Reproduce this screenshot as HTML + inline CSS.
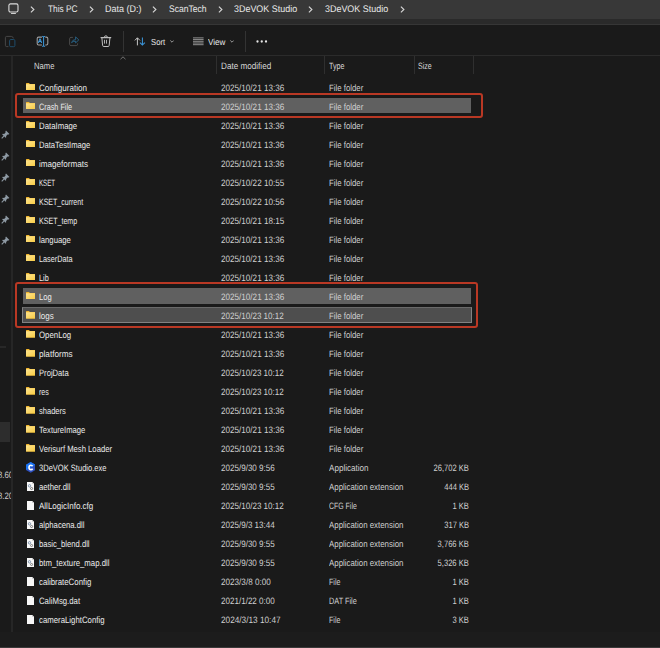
<!DOCTYPE html>
<html><head><meta charset="utf-8">
<style>
html,body{margin:0;padding:0;}
body{width:660px;height:648px;overflow:hidden;background:#1a1a1a;position:relative;font-family:"Liberation Sans",sans-serif;text-rendering:geometricPrecision;}
.abs{position:absolute;}
#addr{position:absolute;left:0;top:0;width:660px;height:19.1px;background:#383838;}
#band{position:absolute;left:0;top:19.1px;width:660px;height:4.899999999999999px;background:#2a2a2a;}
#bandline{position:absolute;left:0;top:23.7px;width:660px;height:1.1px;background:#363636;}
#tb{position:absolute;left:0;top:24.8px;width:660px;height:30.2px;background:#1a1a1a;}
#tbline{position:absolute;left:0;top:55px;width:660px;height:1px;background:#2b2b2b;}
#nav{position:absolute;left:0;top:56px;width:12px;height:592px;background:#1a1a1a;}
#navline{position:absolute;left:11px;top:56px;width:2px;height:575.6px;background:#262626;}
#status{position:absolute;left:0;top:631.6px;width:660px;height:15.2px;background:#1c1c1c;}
#bottom{position:absolute;left:0;top:646.8px;width:660px;height:1.2px;background:#3a3a3a;}
.bc{position:absolute;top:3.3px;height:14px;line-height:14px;font-size:9.6px;color:#e8e8e8;white-space:nowrap;transform-origin:0 50%;}
.chev{position:absolute;top:6px;}
.tbt{position:absolute;top:34.6px;height:14px;line-height:14px;font-size:8.7px;color:#e8e8e8;white-space:nowrap;transform-origin:0 50%;}
.sep{position:absolute;top:31px;width:1px;height:21px;background:#333333;}
.hd{position:absolute;top:58.85px;height:14px;line-height:14px;font-size:9.2px;color:#d8d8d8;white-space:nowrap;transform-origin:0 50%;}
.vd{position:absolute;top:56px;width:1px;height:18px;background:#2f2f2f;}
.row{position:absolute;left:22.9px;width:448.1px;height:15.8px;}
.sel{background:#606060;}
.focus{left:22px;width:449.7px;height:16.5px;margin-top:-0.2px;box-sizing:border-box;border:1px solid #828282;border-top-color:#6a6a6a;background:#4e4e4e;}
.t{position:absolute;height:16px;line-height:16px;font-size:9.2px;white-space:nowrap;transform-origin:0 50%;}
.nm{left:38.7px;color:#ececec;}
.dt{left:220.8px;color:#d0d0d0;}
.ty{left:328.7px;color:#d0d0d0;}
.sz{right:191px;color:#d0d0d0;transform-origin:100% 50%;}
.ic{position:absolute;line-height:0;}
.ic svg{display:block;}
.redbox{position:absolute;border:2.1px solid #b93824;border-radius:3px;box-sizing:border-box;}
.pin{position:absolute;left:0.8px;}
</style></head><body>
<svg width="0" height="0" style="position:absolute"><defs><linearGradient id="fg" x1="0" y1="0" x2="1" y2="1"><stop offset="0" stop-color="#fde592"/><stop offset="1" stop-color="#f8ca40"/></linearGradient></defs></svg>
<div id="addr"></div><div id="band"></div><div id="bandline"></div>
<div id="tb"></div><div id="tbline"></div>
<div id="nav"></div><div id="navline"></div>
<div id="status"></div><div id="bottom"></div>

<svg class="abs" style="left:7.6px;top:2.6px" width="11.5" height="12" viewBox="0 0 11.5 12"><rect x="0.9" y="0.9" width="9.1" height="8.1" rx="1.6" fill="none" stroke="#dcdcdc" stroke-width="1.1"/><path d="M3.2 9.9 L2.8 10.9 H8.1 L7.7 9.9 Z" fill="#cfcfcf"/></svg>
<svg class="chev" style="left:30.2px" width="5" height="7" viewBox="0 0 5 7"><path d="M0.9 0.7 L3.9 3.5 L0.9 6.3" fill="none" stroke="#d8d8d8" stroke-width="1.1"/></svg>
<div class="bc" style="left:48.2px;transform:scaleX(0.867)">This PC</div>
<svg class="chev" style="left:89.2px" width="5" height="7" viewBox="0 0 5 7"><path d="M0.9 0.7 L3.9 3.5 L0.9 6.3" fill="none" stroke="#d8d8d8" stroke-width="1.1"/></svg>
<div class="bc" style="left:105.3px;transform:scaleX(0.935)">Data (D:)</div>
<svg class="chev" style="left:152.3px" width="5" height="7" viewBox="0 0 5 7"><path d="M0.9 0.7 L3.9 3.5 L0.9 6.3" fill="none" stroke="#d8d8d8" stroke-width="1.1"/></svg>
<div class="bc" style="left:168.6px;transform:scaleX(0.892)">ScanTech</div>
<svg class="chev" style="left:217.5px" width="5" height="7" viewBox="0 0 5 7"><path d="M0.9 0.7 L3.9 3.5 L0.9 6.3" fill="none" stroke="#d8d8d8" stroke-width="1.1"/></svg>
<div class="bc" style="left:233.6px;transform:scaleX(0.932)">3DeVOK Studio</div>
<svg class="chev" style="left:308px" width="5" height="7" viewBox="0 0 5 7"><path d="M0.9 0.7 L3.9 3.5 L0.9 6.3" fill="none" stroke="#d8d8d8" stroke-width="1.1"/></svg>
<div class="bc" style="left:324.5px;transform:scaleX(0.932)">3DeVOK Studio</div>
<svg class="chev" style="left:399.8px" width="5" height="7" viewBox="0 0 5 7"><path d="M0.9 0.7 L3.9 3.5 L0.9 6.3" fill="none" stroke="#d8d8d8" stroke-width="1.1"/></svg>

<svg class="abs" style="left:4px;top:35px" width="13" height="13" viewBox="0 0 13 13"><path d="M4.4 11.6 H2.7 Q1.4 11.6 1.4 10.3 V2.7 Q1.4 1.4 2.7 1.4 H7.3 Q9 1.4 9.4 3.4" fill="none" stroke="#474747" stroke-width="1"/><rect x="5.6" y="4.5" width="5.3" height="7.2" rx="1.2" fill="none" stroke="#1f4d6b" stroke-width="1"/></svg>
<svg class="abs" style="left:34px;top:33px" width="16" height="16" viewBox="0 0 16 16"><path d="M7.9 4.1 H4.6 Q3.2 4.1 3.2 5.5 V10.4 Q3.2 11.9 4.6 11.9 H7.9 M11.3 4.1 H12.3 Q13.8 4.1 13.8 5.5 V10.4 Q13.8 11.9 12.3 11.9 H11.3" fill="none" stroke="#a0a0a0" stroke-width="1.05"/><path d="M9.6 3.6 V13.2" stroke="#3fa0e6" stroke-width="0.95"/><path d="M8.1 3.4 Q9.6 3.9 11.1 3.4 M8.1 13.4 Q9.6 12.9 11.1 13.4" fill="none" stroke="#3fa0e6" stroke-width="0.9"/><path d="M4.3 9.9 L6 5.7 L7.7 9.9 M4.9 8.6 H7.1" fill="none" stroke="#3fa0e6" stroke-width="1"/></svg>
<svg class="abs" style="left:66px;top:33px" width="16" height="16" viewBox="0 0 16 16"><path d="M6.9 4.4 H5 Q3.6 4.4 3.6 5.8 V11.2 Q3.6 12.6 5 12.6 H10.2 Q11.6 12.6 11.6 11.2 V10.4" fill="none" stroke="#4a4a4a" stroke-width="1"/><path d="M5.5 9.6 Q6.4 6.6 9.6 6.6 V3.9 L12.8 6.9 L9.6 9.9 V8.2 Q7 8.2 5.5 9.6 Z" fill="none" stroke="#275e80" stroke-width="1" stroke-linejoin="round"/></svg>
<svg class="abs" style="left:98px;top:33px" width="16" height="16" viewBox="0 0 16 16"><path d="M3 4.6 H12.8" stroke="#bdbdbd" stroke-width="1.1" stroke-linecap="round"/><path d="M6.2 4.3 Q6.6 2.8 7.9 2.8 Q9.2 2.8 9.6 4.3" fill="none" stroke="#bdbdbd" stroke-width="1"/><path d="M3.9 5 L4.6 12.4 Q4.7 13.5 5.8 13.5 H10 Q11.1 13.5 11.2 12.4 L11.9 5" fill="none" stroke="#bdbdbd" stroke-width="1"/><path d="M6.5 6.8 V10.6 M8.5 6.8 V10.6" stroke="#b5b5b5" stroke-width="0.95"/></svg>
<div class="sep" style="left:123.3px"></div>
<svg class="abs" style="left:134px;top:36.9px" width="12" height="9.5" viewBox="0 0 12 9.5"><path d="M3.4 8.4 V0.9 M0.9 3.4 L3.4 0.8 L5.9 3.4" fill="none" stroke="#c8c8c8" stroke-width="1"/><path d="M8.4 0.6 V8 M5.9 5.6 L8.4 8.1 L10.9 5.6" fill="none" stroke="#3b94d8" stroke-width="1.05"/></svg>
<div class="tbt" style="left:150.7px;transform:scaleX(0.885)">Sort</div>
<svg class="abs" style="left:169.6px;top:40px" width="4" height="3" viewBox="0 0 4 3"><path d="M0.3 0.5 L2 2.2 L3.7 0.5" fill="none" stroke="#bbb" stroke-width="0.8"/></svg>
<svg class="abs" style="left:192.6px;top:37px" width="11" height="9" viewBox="0 0 11 9"><path d="M0 0.9 H10.6 M0 2.6 H10.6 M0 4.3 H10.6 M0 6.0 H10.6 M0 7.7 H10.6" stroke="#c4c4c4" stroke-width="0.7"/></svg>
<div class="tbt" style="left:208.3px;transform:scaleX(0.931)">View</div>
<svg class="abs" style="left:230.1px;top:40px" width="4" height="3" viewBox="0 0 4 3"><path d="M0.3 0.5 L2 2.2 L3.7 0.5" fill="none" stroke="#bbb" stroke-width="0.8"/></svg>
<div class="sep" style="left:245.2px"></div>
<svg class="abs" style="left:256px;top:40px" width="12" height="3" viewBox="0 0 12 3"><circle cx="1.5" cy="1.5" r="1.15" fill="#e6e6e6"/><circle cx="5.75" cy="1.5" r="1.15" fill="#e6e6e6"/><circle cx="10" cy="1.5" r="1.15" fill="#e6e6e6"/></svg>

<svg class="abs" style="left:119.5px;top:55.5px" width="6" height="4" viewBox="0 0 6 4"><path d="M0.5 3.2 L3 0.8 L5.5 3.2" fill="none" stroke="#8a8a8a" stroke-width="0.8"/></svg>
<div class="hd" style="left:33.6px;transform:scaleX(0.832)">Name</div>
<div class="vd" style="left:216px"></div>
<div class="hd" style="left:220.8px;transform:scaleX(0.886)">Date modified</div>
<div class="vd" style="left:324px"></div>
<div class="hd" style="left:328.7px;transform:scaleX(0.778)">Type</div>
<div class="vd" style="left:413.5px"></div>
<div class="hd" style="left:418px;transform:scaleX(0.769)">Size</div>
<div class="vd" style="left:472.8px"></div>

<svg class="pin" style="top:129.9px" width="9" height="9" viewBox="0 0 9 9"><path d="M5 0.6 L8.4 4 L7.6 4.6 L6.6 4.4 L5.1 5.9 L5.2 7.2 L4.6 7.8 L1.2 4.4 L1.8 3.8 L3.1 3.9 L4.6 2.4 L4.4 1.4 Z" fill="#8d99a3"/><path d="M2.9 6.1 L0.7 8.3" stroke="#8d99a3" stroke-width="1.1"/></svg>
<svg class="pin" style="top:151.5px" width="9" height="9" viewBox="0 0 9 9"><path d="M5 0.6 L8.4 4 L7.6 4.6 L6.6 4.4 L5.1 5.9 L5.2 7.2 L4.6 7.8 L1.2 4.4 L1.8 3.8 L3.1 3.9 L4.6 2.4 L4.4 1.4 Z" fill="#8d99a3"/><path d="M2.9 6.1 L0.7 8.3" stroke="#8d99a3" stroke-width="1.1"/></svg>
<svg class="pin" style="top:172.5px" width="9" height="9" viewBox="0 0 9 9"><path d="M5 0.6 L8.4 4 L7.6 4.6 L6.6 4.4 L5.1 5.9 L5.2 7.2 L4.6 7.8 L1.2 4.4 L1.8 3.8 L3.1 3.9 L4.6 2.4 L4.4 1.4 Z" fill="#8d99a3"/><path d="M2.9 6.1 L0.7 8.3" stroke="#8d99a3" stroke-width="1.1"/></svg>
<svg class="pin" style="top:193.5px" width="9" height="9" viewBox="0 0 9 9"><path d="M5 0.6 L8.4 4 L7.6 4.6 L6.6 4.4 L5.1 5.9 L5.2 7.2 L4.6 7.8 L1.2 4.4 L1.8 3.8 L3.1 3.9 L4.6 2.4 L4.4 1.4 Z" fill="#8d99a3"/><path d="M2.9 6.1 L0.7 8.3" stroke="#8d99a3" stroke-width="1.1"/></svg>
<svg class="pin" style="top:214.5px" width="9" height="9" viewBox="0 0 9 9"><path d="M5 0.6 L8.4 4 L7.6 4.6 L6.6 4.4 L5.1 5.9 L5.2 7.2 L4.6 7.8 L1.2 4.4 L1.8 3.8 L3.1 3.9 L4.6 2.4 L4.4 1.4 Z" fill="#8d99a3"/><path d="M2.9 6.1 L0.7 8.3" stroke="#8d99a3" stroke-width="1.1"/></svg>
<svg class="pin" style="top:235.5px" width="9" height="9" viewBox="0 0 9 9"><path d="M5 0.6 L8.4 4 L7.6 4.6 L6.6 4.4 L5.1 5.9 L5.2 7.2 L4.6 7.8 L1.2 4.4 L1.8 3.8 L3.1 3.9 L4.6 2.4 L4.4 1.4 Z" fill="#8d99a3"/><path d="M2.9 6.1 L0.7 8.3" stroke="#8d99a3" stroke-width="1.1"/></svg>
<div class="abs" style="left:0;top:346.4px;width:6.2px;height:1.3px;background:#282828"></div>
<div class="abs" style="left:0;top:421.6px;width:10px;height:20.4px;background:#2d2d2d"></div>
<div class="abs" style="left:0;top:467.7px;width:11px;height:14px;overflow:hidden"><div style="position:absolute;right:-2.2px;top:0;line-height:14px;font-size:9.2px;color:#d0d0d0;white-space:nowrap;transform:scaleX(0.84);transform-origin:100% 50%">18.60</div></div>
<div class="abs" style="left:0;top:489.1px;width:11px;height:14px;overflow:hidden"><div style="position:absolute;right:-2.2px;top:0;line-height:14px;font-size:9.2px;color:#d0d0d0;white-space:nowrap;transform:scaleX(0.84);transform-origin:100% 50%">18.20</div></div>

<span class="ic" style="left:25.6px;top:82.77px"><svg width="9.6" height="7.4" viewBox="0 0 10 7.4" preserveAspectRatio="none"><path d="M0 0.5 Q0 0 0.5 0 H3.2 L3.9 0.9 H9.5 Q10 0.9 10 1.4 V6.9 Q10 7.4 9.5 7.4 H0.5 Q0 7.4 0 6.9 Z" fill="#f2b52a"/><path d="M0 1.3 H10 V6.9 Q10 7.4 9.5 7.4 H0.5 Q0 7.4 0 6.9 Z" fill="url(#fg)"/></svg></span>
<div class="t nm" style="top:79.50px;transform:scaleX(0.876)">Configuration</div>
<div class="t dt" style="top:79.50px;transform:scaleX(0.884)">2025/10/21 13:36</div>
<div class="t ty" style="top:79.50px;transform:scaleX(0.850)">File folder</div>
<div class="row sel" style="top:97.53px"></div>
<span class="ic" style="left:25.6px;top:101.80px"><svg width="9.6" height="7.4" viewBox="0 0 10 7.4" preserveAspectRatio="none"><path d="M0 0.5 Q0 0 0.5 0 H3.2 L3.9 0.9 H9.5 Q10 0.9 10 1.4 V6.9 Q10 7.4 9.5 7.4 H0.5 Q0 7.4 0 6.9 Z" fill="#f2b52a"/><path d="M0 1.3 H10 V6.9 Q10 7.4 9.5 7.4 H0.5 Q0 7.4 0 6.9 Z" fill="url(#fg)"/></svg></span>
<div class="t nm" style="top:98.53px;transform:scaleX(0.790)">Crash File</div>
<div class="t dt" style="top:98.53px;transform:scaleX(0.884)">2025/10/21 13:36</div>
<div class="t ty" style="top:98.53px;transform:scaleX(0.850)">File folder</div>
<span class="ic" style="left:25.6px;top:120.83px"><svg width="9.6" height="7.4" viewBox="0 0 10 7.4" preserveAspectRatio="none"><path d="M0 0.5 Q0 0 0.5 0 H3.2 L3.9 0.9 H9.5 Q10 0.9 10 1.4 V6.9 Q10 7.4 9.5 7.4 H0.5 Q0 7.4 0 6.9 Z" fill="#f2b52a"/><path d="M0 1.3 H10 V6.9 Q10 7.4 9.5 7.4 H0.5 Q0 7.4 0 6.9 Z" fill="url(#fg)"/></svg></span>
<div class="t nm" style="top:117.56px;transform:scaleX(0.850)">DataImage</div>
<div class="t dt" style="top:117.56px;transform:scaleX(0.884)">2025/10/21 13:36</div>
<div class="t ty" style="top:117.56px;transform:scaleX(0.850)">File folder</div>
<span class="ic" style="left:25.6px;top:139.86px"><svg width="9.6" height="7.4" viewBox="0 0 10 7.4" preserveAspectRatio="none"><path d="M0 0.5 Q0 0 0.5 0 H3.2 L3.9 0.9 H9.5 Q10 0.9 10 1.4 V6.9 Q10 7.4 9.5 7.4 H0.5 Q0 7.4 0 6.9 Z" fill="#f2b52a"/><path d="M0 1.3 H10 V6.9 Q10 7.4 9.5 7.4 H0.5 Q0 7.4 0 6.9 Z" fill="url(#fg)"/></svg></span>
<div class="t nm" style="top:136.59px;transform:scaleX(0.830)">DataTestImage</div>
<div class="t dt" style="top:136.59px;transform:scaleX(0.884)">2025/10/21 13:36</div>
<div class="t ty" style="top:136.59px;transform:scaleX(0.850)">File folder</div>
<span class="ic" style="left:25.6px;top:158.89px"><svg width="9.6" height="7.4" viewBox="0 0 10 7.4" preserveAspectRatio="none"><path d="M0 0.5 Q0 0 0.5 0 H3.2 L3.9 0.9 H9.5 Q10 0.9 10 1.4 V6.9 Q10 7.4 9.5 7.4 H0.5 Q0 7.4 0 6.9 Z" fill="#f2b52a"/><path d="M0 1.3 H10 V6.9 Q10 7.4 9.5 7.4 H0.5 Q0 7.4 0 6.9 Z" fill="url(#fg)"/></svg></span>
<div class="t nm" style="top:155.62px;transform:scaleX(0.879)">imageformats</div>
<div class="t dt" style="top:155.62px;transform:scaleX(0.884)">2025/10/21 13:36</div>
<div class="t ty" style="top:155.62px;transform:scaleX(0.850)">File folder</div>
<span class="ic" style="left:25.6px;top:177.92px"><svg width="9.6" height="7.4" viewBox="0 0 10 7.4" preserveAspectRatio="none"><path d="M0 0.5 Q0 0 0.5 0 H3.2 L3.9 0.9 H9.5 Q10 0.9 10 1.4 V6.9 Q10 7.4 9.5 7.4 H0.5 Q0 7.4 0 6.9 Z" fill="#f2b52a"/><path d="M0 1.3 H10 V6.9 Q10 7.4 9.5 7.4 H0.5 Q0 7.4 0 6.9 Z" fill="url(#fg)"/></svg></span>
<div class="t nm" style="top:174.65px;transform:scaleX(0.671)">KSET</div>
<div class="t dt" style="top:174.65px;transform:scaleX(0.884)">2025/10/22 10:55</div>
<div class="t ty" style="top:174.65px;transform:scaleX(0.850)">File folder</div>
<span class="ic" style="left:25.6px;top:196.95px"><svg width="9.6" height="7.4" viewBox="0 0 10 7.4" preserveAspectRatio="none"><path d="M0 0.5 Q0 0 0.5 0 H3.2 L3.9 0.9 H9.5 Q10 0.9 10 1.4 V6.9 Q10 7.4 9.5 7.4 H0.5 Q0 7.4 0 6.9 Z" fill="#f2b52a"/><path d="M0 1.3 H10 V6.9 Q10 7.4 9.5 7.4 H0.5 Q0 7.4 0 6.9 Z" fill="url(#fg)"/></svg></span>
<div class="t nm" style="top:193.68px;transform:scaleX(0.764)">KSET_current</div>
<div class="t dt" style="top:193.68px;transform:scaleX(0.884)">2025/10/22 10:56</div>
<div class="t ty" style="top:193.68px;transform:scaleX(0.850)">File folder</div>
<span class="ic" style="left:25.6px;top:215.98px"><svg width="9.6" height="7.4" viewBox="0 0 10 7.4" preserveAspectRatio="none"><path d="M0 0.5 Q0 0 0.5 0 H3.2 L3.9 0.9 H9.5 Q10 0.9 10 1.4 V6.9 Q10 7.4 9.5 7.4 H0.5 Q0 7.4 0 6.9 Z" fill="#f2b52a"/><path d="M0 1.3 H10 V6.9 Q10 7.4 9.5 7.4 H0.5 Q0 7.4 0 6.9 Z" fill="url(#fg)"/></svg></span>
<div class="t nm" style="top:212.71px;transform:scaleX(0.771)">KSET_temp</div>
<div class="t dt" style="top:212.71px;transform:scaleX(0.884)">2025/10/21 18:15</div>
<div class="t ty" style="top:212.71px;transform:scaleX(0.850)">File folder</div>
<span class="ic" style="left:25.6px;top:235.01px"><svg width="9.6" height="7.4" viewBox="0 0 10 7.4" preserveAspectRatio="none"><path d="M0 0.5 Q0 0 0.5 0 H3.2 L3.9 0.9 H9.5 Q10 0.9 10 1.4 V6.9 Q10 7.4 9.5 7.4 H0.5 Q0 7.4 0 6.9 Z" fill="#f2b52a"/><path d="M0 1.3 H10 V6.9 Q10 7.4 9.5 7.4 H0.5 Q0 7.4 0 6.9 Z" fill="url(#fg)"/></svg></span>
<div class="t nm" style="top:231.74px;transform:scaleX(0.844)">language</div>
<div class="t dt" style="top:231.74px;transform:scaleX(0.884)">2025/10/21 13:36</div>
<div class="t ty" style="top:231.74px;transform:scaleX(0.850)">File folder</div>
<span class="ic" style="left:25.6px;top:254.04px"><svg width="9.6" height="7.4" viewBox="0 0 10 7.4" preserveAspectRatio="none"><path d="M0 0.5 Q0 0 0.5 0 H3.2 L3.9 0.9 H9.5 Q10 0.9 10 1.4 V6.9 Q10 7.4 9.5 7.4 H0.5 Q0 7.4 0 6.9 Z" fill="#f2b52a"/><path d="M0 1.3 H10 V6.9 Q10 7.4 9.5 7.4 H0.5 Q0 7.4 0 6.9 Z" fill="url(#fg)"/></svg></span>
<div class="t nm" style="top:250.77px;transform:scaleX(0.793)">LaserData</div>
<div class="t dt" style="top:250.77px;transform:scaleX(0.884)">2025/10/21 13:36</div>
<div class="t ty" style="top:250.77px;transform:scaleX(0.850)">File folder</div>
<span class="ic" style="left:25.6px;top:273.07px"><svg width="9.6" height="7.4" viewBox="0 0 10 7.4" preserveAspectRatio="none"><path d="M0 0.5 Q0 0 0.5 0 H3.2 L3.9 0.9 H9.5 Q10 0.9 10 1.4 V6.9 Q10 7.4 9.5 7.4 H0.5 Q0 7.4 0 6.9 Z" fill="#f2b52a"/><path d="M0 1.3 H10 V6.9 Q10 7.4 9.5 7.4 H0.5 Q0 7.4 0 6.9 Z" fill="url(#fg)"/></svg></span>
<div class="t nm" style="top:269.80px;transform:scaleX(0.799)">Lib</div>
<div class="t dt" style="top:269.80px;transform:scaleX(0.884)">2025/10/21 13:36</div>
<div class="t ty" style="top:269.80px;transform:scaleX(0.850)">File folder</div>
<div class="row sel" style="top:287.83px"></div>
<span class="ic" style="left:25.6px;top:292.10px"><svg width="9.6" height="7.4" viewBox="0 0 10 7.4" preserveAspectRatio="none"><path d="M0 0.5 Q0 0 0.5 0 H3.2 L3.9 0.9 H9.5 Q10 0.9 10 1.4 V6.9 Q10 7.4 9.5 7.4 H0.5 Q0 7.4 0 6.9 Z" fill="#f2b52a"/><path d="M0 1.3 H10 V6.9 Q10 7.4 9.5 7.4 H0.5 Q0 7.4 0 6.9 Z" fill="url(#fg)"/></svg></span>
<div class="t nm" style="top:288.83px;transform:scaleX(0.828)">Log</div>
<div class="t dt" style="top:288.83px;transform:scaleX(0.884)">2025/10/21 13:36</div>
<div class="t ty" style="top:288.83px;transform:scaleX(0.850)">File folder</div>
<div class="row sel focus" style="top:306.86px"></div>
<span class="ic" style="left:25.6px;top:311.13px"><svg width="9.6" height="7.4" viewBox="0 0 10 7.4" preserveAspectRatio="none"><path d="M0 0.5 Q0 0 0.5 0 H3.2 L3.9 0.9 H9.5 Q10 0.9 10 1.4 V6.9 Q10 7.4 9.5 7.4 H0.5 Q0 7.4 0 6.9 Z" fill="#f2b52a"/><path d="M0 1.3 H10 V6.9 Q10 7.4 9.5 7.4 H0.5 Q0 7.4 0 6.9 Z" fill="url(#fg)"/></svg></span>
<div class="t nm" style="top:307.86px;transform:scaleX(0.872)">logs</div>
<div class="t dt" style="top:307.86px;transform:scaleX(0.878)">2025/10/23 10:12</div>
<div class="t ty" style="top:307.86px;transform:scaleX(0.850)">File folder</div>
<span class="ic" style="left:25.6px;top:330.16px"><svg width="9.6" height="7.4" viewBox="0 0 10 7.4" preserveAspectRatio="none"><path d="M0 0.5 Q0 0 0.5 0 H3.2 L3.9 0.9 H9.5 Q10 0.9 10 1.4 V6.9 Q10 7.4 9.5 7.4 H0.5 Q0 7.4 0 6.9 Z" fill="#f2b52a"/><path d="M0 1.3 H10 V6.9 Q10 7.4 9.5 7.4 H0.5 Q0 7.4 0 6.9 Z" fill="url(#fg)"/></svg></span>
<div class="t nm" style="top:326.89px;transform:scaleX(0.852)">OpenLog</div>
<div class="t dt" style="top:326.89px;transform:scaleX(0.884)">2025/10/21 13:36</div>
<div class="t ty" style="top:326.89px;transform:scaleX(0.850)">File folder</div>
<span class="ic" style="left:25.6px;top:349.19px"><svg width="9.6" height="7.4" viewBox="0 0 10 7.4" preserveAspectRatio="none"><path d="M0 0.5 Q0 0 0.5 0 H3.2 L3.9 0.9 H9.5 Q10 0.9 10 1.4 V6.9 Q10 7.4 9.5 7.4 H0.5 Q0 7.4 0 6.9 Z" fill="#f2b52a"/><path d="M0 1.3 H10 V6.9 Q10 7.4 9.5 7.4 H0.5 Q0 7.4 0 6.9 Z" fill="url(#fg)"/></svg></span>
<div class="t nm" style="top:345.92px;transform:scaleX(0.889)">platforms</div>
<div class="t dt" style="top:345.92px;transform:scaleX(0.884)">2025/10/21 13:36</div>
<div class="t ty" style="top:345.92px;transform:scaleX(0.850)">File folder</div>
<span class="ic" style="left:25.6px;top:368.22px"><svg width="9.6" height="7.4" viewBox="0 0 10 7.4" preserveAspectRatio="none"><path d="M0 0.5 Q0 0 0.5 0 H3.2 L3.9 0.9 H9.5 Q10 0.9 10 1.4 V6.9 Q10 7.4 9.5 7.4 H0.5 Q0 7.4 0 6.9 Z" fill="#f2b52a"/><path d="M0 1.3 H10 V6.9 Q10 7.4 9.5 7.4 H0.5 Q0 7.4 0 6.9 Z" fill="url(#fg)"/></svg></span>
<div class="t nm" style="top:364.95px;transform:scaleX(0.831)">ProjData</div>
<div class="t dt" style="top:364.95px;transform:scaleX(0.878)">2025/10/23 10:12</div>
<div class="t ty" style="top:364.95px;transform:scaleX(0.850)">File folder</div>
<span class="ic" style="left:25.6px;top:387.25px"><svg width="9.6" height="7.4" viewBox="0 0 10 7.4" preserveAspectRatio="none"><path d="M0 0.5 Q0 0 0.5 0 H3.2 L3.9 0.9 H9.5 Q10 0.9 10 1.4 V6.9 Q10 7.4 9.5 7.4 H0.5 Q0 7.4 0 6.9 Z" fill="#f2b52a"/><path d="M0 1.3 H10 V6.9 Q10 7.4 9.5 7.4 H0.5 Q0 7.4 0 6.9 Z" fill="url(#fg)"/></svg></span>
<div class="t nm" style="top:383.98px;transform:scaleX(0.768)">res</div>
<div class="t dt" style="top:383.98px;transform:scaleX(0.878)">2025/10/23 10:12</div>
<div class="t ty" style="top:383.98px;transform:scaleX(0.850)">File folder</div>
<span class="ic" style="left:25.6px;top:406.28px"><svg width="9.6" height="7.4" viewBox="0 0 10 7.4" preserveAspectRatio="none"><path d="M0 0.5 Q0 0 0.5 0 H3.2 L3.9 0.9 H9.5 Q10 0.9 10 1.4 V6.9 Q10 7.4 9.5 7.4 H0.5 Q0 7.4 0 6.9 Z" fill="#f2b52a"/><path d="M0 1.3 H10 V6.9 Q10 7.4 9.5 7.4 H0.5 Q0 7.4 0 6.9 Z" fill="url(#fg)"/></svg></span>
<div class="t nm" style="top:403.01px;transform:scaleX(0.820)">shaders</div>
<div class="t dt" style="top:403.01px;transform:scaleX(0.884)">2025/10/21 13:36</div>
<div class="t ty" style="top:403.01px;transform:scaleX(0.850)">File folder</div>
<span class="ic" style="left:25.6px;top:425.31px"><svg width="9.6" height="7.4" viewBox="0 0 10 7.4" preserveAspectRatio="none"><path d="M0 0.5 Q0 0 0.5 0 H3.2 L3.9 0.9 H9.5 Q10 0.9 10 1.4 V6.9 Q10 7.4 9.5 7.4 H0.5 Q0 7.4 0 6.9 Z" fill="#f2b52a"/><path d="M0 1.3 H10 V6.9 Q10 7.4 9.5 7.4 H0.5 Q0 7.4 0 6.9 Z" fill="url(#fg)"/></svg></span>
<div class="t nm" style="top:422.04px;transform:scaleX(0.832)">TextureImage</div>
<div class="t dt" style="top:422.04px;transform:scaleX(0.884)">2025/10/21 13:36</div>
<div class="t ty" style="top:422.04px;transform:scaleX(0.850)">File folder</div>
<span class="ic" style="left:25.6px;top:444.34px"><svg width="9.6" height="7.4" viewBox="0 0 10 7.4" preserveAspectRatio="none"><path d="M0 0.5 Q0 0 0.5 0 H3.2 L3.9 0.9 H9.5 Q10 0.9 10 1.4 V6.9 Q10 7.4 9.5 7.4 H0.5 Q0 7.4 0 6.9 Z" fill="#f2b52a"/><path d="M0 1.3 H10 V6.9 Q10 7.4 9.5 7.4 H0.5 Q0 7.4 0 6.9 Z" fill="url(#fg)"/></svg></span>
<div class="t nm" style="top:441.07px;transform:scaleX(0.836)">Verisurf Mesh Loader</div>
<div class="t dt" style="top:441.07px;transform:scaleX(0.884)">2025/10/21 13:36</div>
<div class="t ty" style="top:441.07px;transform:scaleX(0.850)">File folder</div>
<span class="ic" style="left:25.7px;top:462.17px"><svg width="9.4" height="10.8" viewBox="0 0 9.4 10.8"><path d="M4.7 0 L9.4 2.7 V8.1 L4.7 10.8 L0 8.1 V2.7 Z" fill="#2c4fc0"/><path d="M4.7 0 L9.4 2.7 L4.7 5.4 L0 8.1 V2.7 Z" fill="#1a74f2"/><path d="M6.6 4.2 Q6.2 3.2 4.9 3.2 Q3 3.2 3 5.4 Q3 7.6 4.9 7.6 Q6.2 7.6 6.6 6.6" fill="none" stroke="#fff" stroke-width="1.6"/></svg></span>
<div class="t nm" style="top:460.10px;transform:scaleX(0.820)">3DeVOK Studio.exe</div>
<div class="t dt" style="top:460.10px;transform:scaleX(0.877)">2025/9/30 9:56</div>
<div class="t ty" style="top:460.10px;transform:scaleX(0.881)">Application</div>
<div class="t sz" style="top:460.10px;transform:scaleX(0.825)">26,702 KB</div>
<span class="ic" style="left:26.8px;top:481.90px"><svg width="7.2" height="9.1" viewBox="0 0 7.2 9.1"><path d="M0 0 H5.2 L7.2 2 V9.1 H0 Z" fill="#f7f7f7"/><path d="M5.2 0 V2 H7.2 Z" fill="#c9c9c9"/><circle cx="2.5" cy="3.8" r="1.2" fill="none" stroke="#8296b0" stroke-width="1"/><circle cx="4.6" cy="6.5" r="1.05" fill="none" stroke="#7a7a7a" stroke-width="1"/></svg></span>
<div class="t nm" style="top:479.13px;transform:scaleX(0.842)">aether.dll</div>
<div class="t dt" style="top:479.13px;transform:scaleX(0.877)">2025/9/30 9:55</div>
<div class="t ty" style="top:479.13px;transform:scaleX(0.857)">Application extension</div>
<div class="t sz" style="top:479.13px;transform:scaleX(0.825)">444 KB</div>
<span class="ic" style="left:26.8px;top:500.93px"><svg width="7.2" height="9.1" viewBox="0 0 7.2 9.1"><path d="M0 0 H5.2 L7.2 2 V9.1 H0 Z" fill="#f7f7f7"/><path d="M5.2 0 V2 H7.2 Z" fill="#c9c9c9"/></svg></span>
<div class="t nm" style="top:498.16px;transform:scaleX(0.871)">AllLogicInfo.cfg</div>
<div class="t dt" style="top:498.16px;transform:scaleX(0.878)">2025/10/23 10:12</div>
<div class="t ty" style="top:498.16px;transform:scaleX(0.756)">CFG File</div>
<div class="t sz" style="top:498.16px;transform:scaleX(0.825)">1 KB</div>
<span class="ic" style="left:26.8px;top:519.96px"><svg width="7.2" height="9.1" viewBox="0 0 7.2 9.1"><path d="M0 0 H5.2 L7.2 2 V9.1 H0 Z" fill="#f7f7f7"/><path d="M5.2 0 V2 H7.2 Z" fill="#c9c9c9"/><circle cx="2.5" cy="3.8" r="1.2" fill="none" stroke="#8296b0" stroke-width="1"/><circle cx="4.6" cy="6.5" r="1.05" fill="none" stroke="#7a7a7a" stroke-width="1"/></svg></span>
<div class="t nm" style="top:517.19px;transform:scaleX(0.840)">alphacena.dll</div>
<div class="t dt" style="top:517.19px;transform:scaleX(0.877)">2025/9/3 13:44</div>
<div class="t ty" style="top:517.19px;transform:scaleX(0.857)">Application extension</div>
<div class="t sz" style="top:517.19px;transform:scaleX(0.825)">317 KB</div>
<span class="ic" style="left:26.8px;top:538.99px"><svg width="7.2" height="9.1" viewBox="0 0 7.2 9.1"><path d="M0 0 H5.2 L7.2 2 V9.1 H0 Z" fill="#f7f7f7"/><path d="M5.2 0 V2 H7.2 Z" fill="#c9c9c9"/><circle cx="2.5" cy="3.8" r="1.2" fill="none" stroke="#8296b0" stroke-width="1"/><circle cx="4.6" cy="6.5" r="1.05" fill="none" stroke="#7a7a7a" stroke-width="1"/></svg></span>
<div class="t nm" style="top:536.22px;transform:scaleX(0.832)">basic_blend.dll</div>
<div class="t dt" style="top:536.22px;transform:scaleX(0.877)">2025/9/30 9:55</div>
<div class="t ty" style="top:536.22px;transform:scaleX(0.857)">Application extension</div>
<div class="t sz" style="top:536.22px;transform:scaleX(0.825)">3,766 KB</div>
<span class="ic" style="left:26.8px;top:558.02px"><svg width="7.2" height="9.1" viewBox="0 0 7.2 9.1"><path d="M0 0 H5.2 L7.2 2 V9.1 H0 Z" fill="#f7f7f7"/><path d="M5.2 0 V2 H7.2 Z" fill="#c9c9c9"/><circle cx="2.5" cy="3.8" r="1.2" fill="none" stroke="#8296b0" stroke-width="1"/><circle cx="4.6" cy="6.5" r="1.05" fill="none" stroke="#7a7a7a" stroke-width="1"/></svg></span>
<div class="t nm" style="top:555.25px;transform:scaleX(0.846)">btm_texture_map.dll</div>
<div class="t dt" style="top:555.25px;transform:scaleX(0.877)">2025/9/30 9:55</div>
<div class="t ty" style="top:555.25px;transform:scaleX(0.857)">Application extension</div>
<div class="t sz" style="top:555.25px;transform:scaleX(0.825)">5,326 KB</div>
<span class="ic" style="left:26.8px;top:577.05px"><svg width="7.2" height="9.1" viewBox="0 0 7.2 9.1"><path d="M0 0 H5.2 L7.2 2 V9.1 H0 Z" fill="#f7f7f7"/><path d="M5.2 0 V2 H7.2 Z" fill="#c9c9c9"/></svg></span>
<div class="t nm" style="top:574.28px;transform:scaleX(0.853)">calibrateConfig</div>
<div class="t dt" style="top:574.28px;transform:scaleX(0.886)">2023/3/8 0:00</div>
<div class="t ty" style="top:574.28px;transform:scaleX(0.770)">File</div>
<div class="t sz" style="top:574.28px;transform:scaleX(0.825)">1 KB</div>
<span class="ic" style="left:26.8px;top:596.08px"><svg width="7.2" height="9.1" viewBox="0 0 7.2 9.1"><path d="M0 0 H5.2 L7.2 2 V9.1 H0 Z" fill="#f7f7f7"/><path d="M5.2 0 V2 H7.2 Z" fill="#c9c9c9"/></svg></span>
<div class="t nm" style="top:593.31px;transform:scaleX(0.847)">CaliMsg.dat</div>
<div class="t dt" style="top:593.31px;transform:scaleX(0.877)">2021/1/22 0:00</div>
<div class="t ty" style="top:593.31px;transform:scaleX(0.797)">DAT File</div>
<div class="t sz" style="top:593.31px;transform:scaleX(0.825)">1 KB</div>
<span class="ic" style="left:26.8px;top:615.11px"><svg width="7.2" height="9.1" viewBox="0 0 7.2 9.1"><path d="M0 0 H5.2 L7.2 2 V9.1 H0 Z" fill="#f7f7f7"/><path d="M5.2 0 V2 H7.2 Z" fill="#c9c9c9"/></svg></span>
<div class="t nm" style="top:612.34px;transform:scaleX(0.849)">cameraLightConfig</div>
<div class="t dt" style="top:612.34px;transform:scaleX(0.897)">2024/3/13 10:47</div>
<div class="t ty" style="top:612.34px;transform:scaleX(0.770)">File</div>
<div class="t sz" style="top:612.34px;transform:scaleX(0.825)">3 KB</div>

<div class="redbox" style="left:14.7px;top:93px;width:468.4px;height:24.9px"></div>
<div class="redbox" style="left:14.9px;top:282px;width:463.3px;height:46px"></div>
</body></html>
